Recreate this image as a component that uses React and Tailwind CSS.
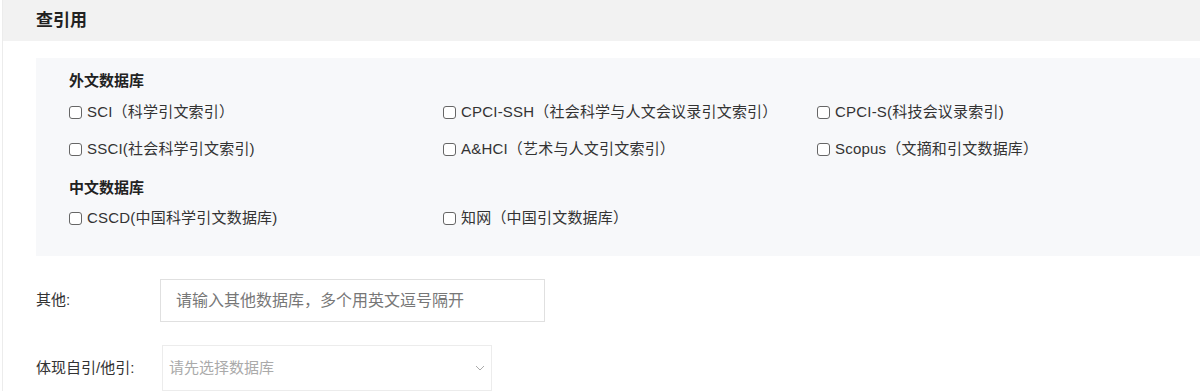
import React from "react";

const foreign = [
  "SCI（科学引文索引）",
  "CPCI-SSH（社会科学与人文会议录引文索引）",
  "CPCI-S(科技会议录索引)",
  "SSCI(社会科学引文索引)",
  "A&HCI（艺术与人文引文索引）",
  "Scopus（文摘和引文数据库）",
];

const chinese = ["CSCD(中国科学引文数据库)", "知网（中国引文数据库）"];

function Check({ label }) {
  return (
    <label className="flex h-[37px] items-center text-[15px] tracking-[0.2px] text-[#333]">
      <span className="mr-[5px] h-[13px] w-[13px] shrink-0 rounded-[3px] border border-[#666] bg-white" />
      {label}
    </label>
  );
}

export default function App() {
  return (
    <div
      className="ml-[2px] min-h-[391px] border-l border-[#ececec] bg-white"
      style={{ fontFamily: '"Liberation Sans", "Noto Sans CJK SC", sans-serif' }}
    >
      <div className="flex h-[41px] items-center bg-[#f2f2f2] pl-[33px] text-[17px] font-bold text-[#222]">
        查引用
      </div>

      <div className="pl-[33px]">
        <div className="mt-[17px] bg-[#f7f8fa] pb-[19px] pl-[33px] pt-[12px]">
          <div className="h-[24px] text-[15px] font-bold leading-[22px] text-[#222]">
            外文数据库
          </div>
          <div className="grid grid-cols-[374px_374px_1fr]">
            {foreign.map((f) => (
              <Check key={f} label={f} />
            ))}
          </div>
          <div className="mt-[9px] h-[23px] text-[15px] font-bold leading-[22px] text-[#222]">
            中文数据库
          </div>
          <div className="grid grid-cols-[374px_374px_1fr]">
            {chinese.map((f) => (
              <Check key={f} label={f} />
            ))}
          </div>
        </div>

        <div className="mt-[23px] flex items-center">
          <div className="w-[124px] text-[15px] text-[#333]">其他:</div>
          <input
            className="h-[43px] w-[385px] border border-[#e0e0e0] bg-white pl-[15px] text-[16px] outline-none placeholder:text-[#777]"
            placeholder="请输入其他数据库，多个用英文逗号隔开"
          />
        </div>

        <div className="mt-[23px] flex items-center">
          <div className="w-[126px] text-[15px] text-[#333]">体现自引/他引:</div>
          <div className="flex h-[46px] w-[330px] items-center justify-between border border-[#ececec] bg-white pl-[6px] pr-[6px]">
            <span className="text-[15px] text-[#aaa]">请先选择数据库</span>
            <svg width="10" height="6" viewBox="0 0 10 6" fill="none">
              <polyline points="1,1 5,5 9,1" stroke="#aaa" strokeWidth="1" />
            </svg>
          </div>
        </div>
      </div>
    </div>
  );
}
